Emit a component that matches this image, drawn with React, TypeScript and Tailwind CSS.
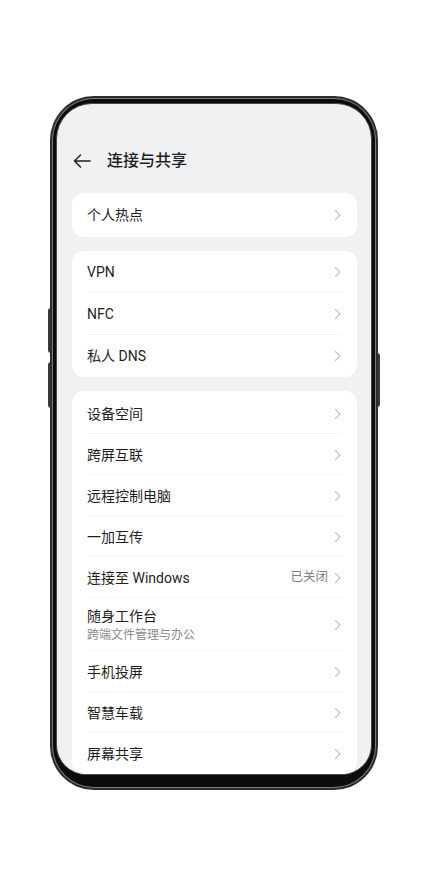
const font = { fontFamily: '"Roboto", "Noto Sans CJK SC", sans-serif' };

type Row = { title: string; sub?: string; value?: string };

const group2: Row[] = [{ title: "VPN" }, { title: "NFC" }, { title: "私人 DNS" }];

const group3: Row[] = [
    { title: "设备空间" },
    { title: "跨屏互联" },
    { title: "远程控制电脑" },
    { title: "一加互传" },
    { title: "连接至 Windows", value: "已关闭" },
    { title: "随身工作台", sub: "跨端文件管理与办公" },
    { title: "手机投屏" },
    { title: "智慧车载" },
    { title: "屏幕共享" },
];

const Chevron = () => (
    <svg width="8" height="12" viewBox="0 0 8 12" fill="none" className="shrink-0">
        <path d="M1.5 1.5L6 6l-4.5 4.5" stroke="#c4c4c4" strokeWidth="1.2" strokeLinecap="round" strokeLinejoin="round" />
    </svg>
);

const Item = ({ row, h, divider }: { row: Row; h: string; divider: boolean }) => (
    <div className={`relative flex items-center px-[15px] ${row.sub ? "h-[53px]" : h}`}>
        <div className="flex flex-col flex-1">
            <span className="text-[14px] leading-[20px] text-[#1e1e1e]">{row.title}</span>
            {row.sub && <span className="text-[12px] leading-[16px] mt-[1px] text-[#8c8c8c]">{row.sub}</span>}
        </div>
        {row.value && <span className="text-[12.5px] text-[#808080] mr-[6px]">{row.value}</span>}
        <Chevron />
        {divider && <div className="absolute bottom-0 left-[15px] right-[14px] h-px bg-[#f5f5f5]" />}
    </div>
);

const App = () => {
    return (
        <div className="w-[426px] h-[881px] bg-white pt-[96px]" style={font}>
            <div className="relative ml-[50px] w-[328px] h-[694px]">
                <div className="absolute left-[-2px] top-[212px] w-[3px] h-[45px] bg-[#3a3a3a] rounded-l-sm" />
                <div className="absolute left-[-2px] top-[266px] w-[3px] h-[46px] bg-[#3a3a3a] rounded-l-sm" />
                <div className="absolute right-[-2px] top-[257px] w-[3px] h-[54px] bg-[#3a3a3a] rounded-r-sm" />
                <div className="relative w-full h-full rounded-[44px] bg-[#2c2c2c] p-[2px]">
                    <div className="w-full h-full rounded-[42px] bg-[#7c7c7c] p-px">
                        <div className="w-full h-full rounded-[41px] bg-[#0c0c0c] px-[3px] pt-[4px] pb-[12px]">
                            <div className="w-full h-full rounded-t-[36px] rounded-b-[30px] bg-[#f0f1f3] overflow-hidden border border-[#4a4a4a]">
                                <div className="flex items-center h-6 mt-[45px] pl-[16px]">
                                    <svg width="18" height="14" viewBox="0 0 18 14" fill="none">
                                        <path d="M17 7H1.5M7.5 1L1.5 7l6 6" stroke="#222" strokeWidth="1.5" strokeLinecap="round" strokeLinejoin="round" />
                                    </svg>
                                    <span className="ml-[16px] text-[16px] text-[#1e1e1e] font-medium">连接与共享</span>
                                </div>
                                <div className="mx-[14px] pl-px mt-[20px] flex flex-col gap-[14px]">
                                    <div className="bg-white rounded-[12px]">
                                        <Item row={{ title: "个人热点" }} h="h-[44px]" divider={false} />
                                    </div>
                                    <div className="bg-white rounded-[12px]">
                                        {group2.map((r, i) => (
                                            <Item key={r.title} row={r} h="h-[42px]" divider={i < group2.length - 1} />
                                        ))}
                                    </div>
                                    <div className="bg-white rounded-[12px] pt-[2px]">
                                        {group3.map((r, i) => (
                                            <Item key={r.title} row={r} h="h-[41px]" divider={i < group3.length - 1} />
                                        ))}
                                    </div>
                                </div>
                            </div>
                        </div>
                    </div>
                </div>
            </div>
        </div>
    );
};

export default App;
